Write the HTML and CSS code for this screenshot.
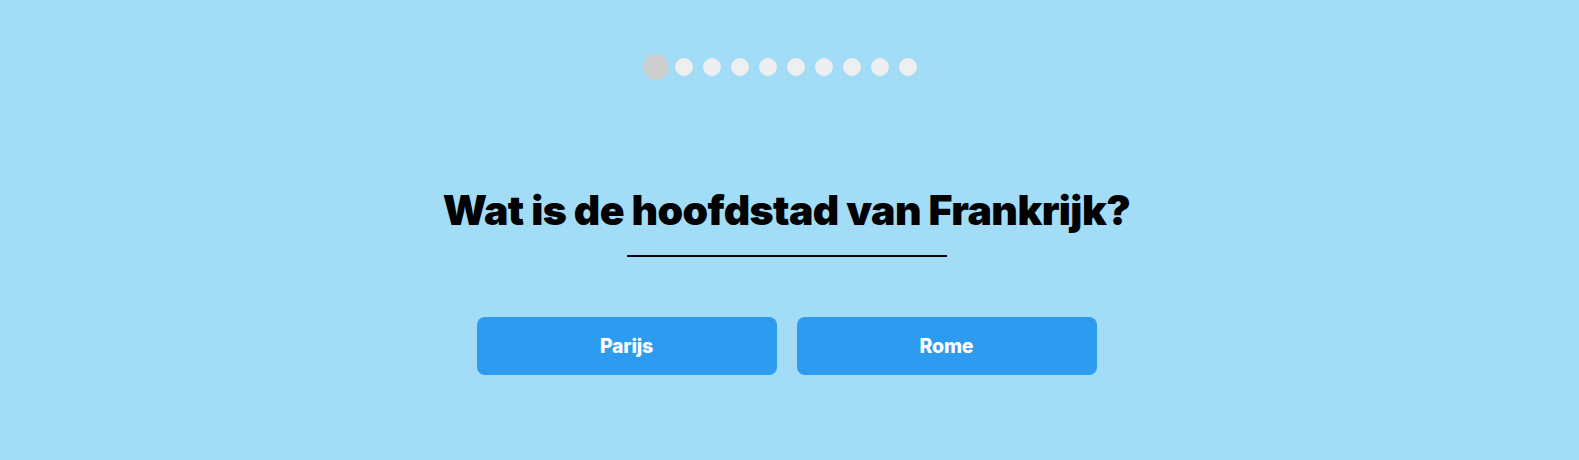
FILE: index.html
```html
<!DOCTYPE html>
<html lang="nl">
<head>
<meta charset="utf-8">
<title>Quiz</title>
<link rel="stylesheet" href="styles.css">
</head>
<body>
<main class="quiz">
  <div class="dots">
    <span class="dot active"></span>
    <span class="dot"></span>
    <span class="dot"></span>
    <span class="dot"></span>
    <span class="dot"></span>
    <span class="dot"></span>
    <span class="dot"></span>
    <span class="dot"></span>
    <span class="dot"></span>
    <span class="dot"></span>
  </div>
  <h1 class="question">Wat is de hoofdstad van Frankrijk?</h1>
  <div class="rule"></div>
  <div class="answers">
    <button class="answer">Parijs</button>
    <button class="answer">Rome</button>
  </div>
</main>
</body>
</html>
```

FILE: styles.css
```css
html, body {
  margin: 0;
  padding: 0;
}
body {
  background: #a3dcf7;
  font-family: Inter, "Noto Sans", sans-serif;
  height: 460px;
  overflow: hidden;
}
.quiz {
  display: flex;
  flex-direction: column;
  align-items: center;
  padding-right: 6px;
}
.dots {
  display: flex;
  padding-top: 58px;
  padding-right: 9px;
}
.dot {
  width: 18px;
  height: 18px;
  border-radius: 50%;
  background: #eeeff0;
  margin: 0 5px;
}
.dot.active {
  background: #cdcdce;
  transform: scale(1.4);
}
.question {
  margin: 109px 0 0;
  font-size: 41px;
  font-weight: 900;
  letter-spacing: -0.6px;
  line-height: 50px;
  color: #000;
}
.rule {
  width: 320px;
  height: 2px;
  background: #000;
  margin-top: 20px;
}
.answers {
  display: flex;
  gap: 20px;
  margin-top: 60px;
}
.answer {
  width: 300px;
  height: 58px;
  border: none;
  border-radius: 8px;
  background: #2d9bef;
  color: #fff;
  font-family: Inter, "Noto Sans", sans-serif;
  font-size: 19.5px;
  font-weight: 800;
  letter-spacing: -0.2px;
  padding: 0;
}
```
